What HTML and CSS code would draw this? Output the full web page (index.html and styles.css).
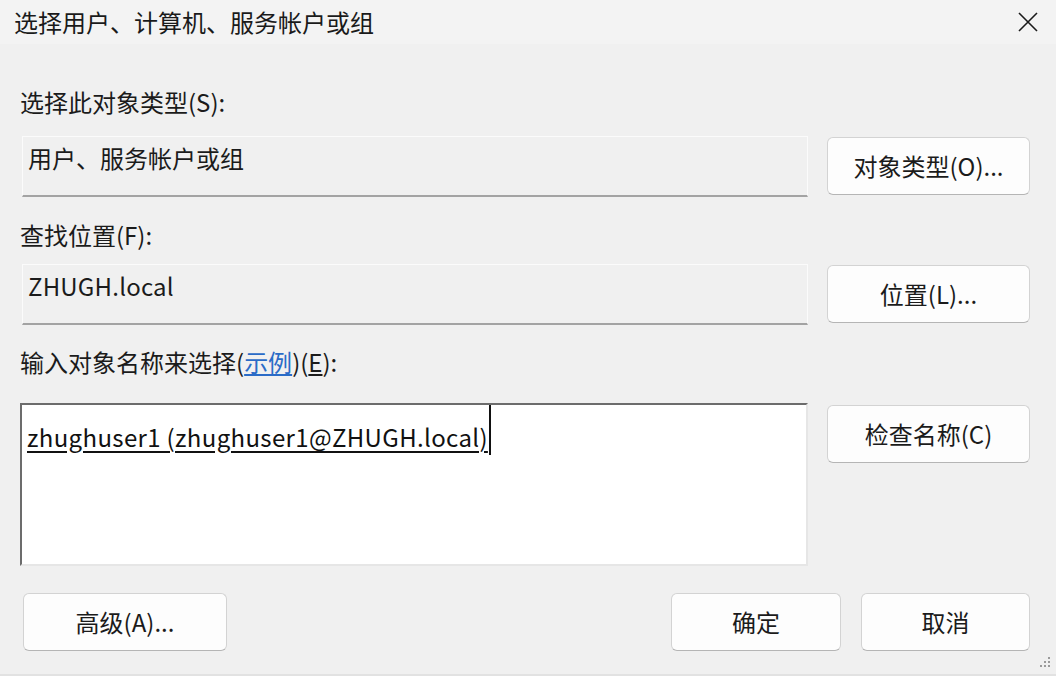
FILE: index.html
```html
<!DOCTYPE html>
<html lang="zh-CN">
<head>
<meta charset="utf-8">
<title>选择用户、计算机、服务帐户或组</title>
<link rel="stylesheet" href="styles.css">
</head>
<body>
<div class="dialog">
  <div class="titlebar">
    <span class="title">选择用户、计算机、服务帐户或组</span>
    <span class="close" aria-label="关闭">
      <svg width="20" height="20" viewBox="0 0 20 20"><path d="M1 1 L19 19 M19 1 L1 19" stroke="#1a1a1a" stroke-width="1.6" fill="none"/></svg>
    </span>
  </div>
  <div class="content">
    <div class="label label-1">选择此对象类型(S):</div>
    <div class="row row-1">
      <div class="field">用户、服务帐户或组</div>
      <button class="btn btn-side">对象类型(O)...</button>
    </div>
    <div class="label label-2">查找位置(F):</div>
    <div class="row row-2">
      <div class="field field-latin">ZHUGH.local</div>
      <button class="btn btn-side">位置(L)...</button>
    </div>
    <div class="label label-3">输入对象名称来选择(<span class="link">示例</span>)(<u>E</u>):</div>
    <div class="row row-3">
      <div class="textarea"><span class="name">zhughuser1 (zhughuser1@ZHUGH.local)</span><span class="caret"></span></div>
      <button class="btn btn-side">检查名称(C)</button>
    </div>
    <div class="footer">
      <button class="btn btn-adv">高级(A)...</button>
      <div class="spacer"></div>
      <button class="btn btn-ok">确定</button>
      <button class="btn btn-cancel">取消</button>
    </div>
  </div>
  <svg class="grip" width="14" height="14" viewBox="0 0 14 14">
    <g fill="#9a9a9a">
      <rect x="11" y="1" width="2" height="2"/>
      <rect x="7" y="5" width="2" height="2"/><rect x="11" y="5" width="2" height="2"/>
      <rect x="3" y="9" width="2" height="2"/><rect x="7" y="9" width="2" height="2"/><rect x="11" y="9" width="2" height="2"/>
    </g>
  </svg>
</div>
</body>
</html>
```
FILE: styles.css
```css
html, body {
  margin: 0;
  padding: 0;
  background: #f0f0f0;
}
body {
  font-family: "Noto Sans CJK SC", "Noto Sans", sans-serif;
  color: #1b1b1b;
  font-size: 24px;
  line-height: 32px;
}
.dialog {
  position: relative;
  width: 1056px;
  height: 676px;
  box-sizing: border-box;
  background: #f0f0f0;
  border-bottom: 2px solid #e2e2e2;
  overflow: hidden;
}
.titlebar {
  height: 44px;
  display: flex;
  align-items: center;
  justify-content: space-between;
  padding: 0 18px 0 14px;
  background: #f3f3f3;
}
.title {
  font-size: 24px;
  line-height: 32px;
  color: #1a1a1a;
}
.close {
  display: flex;
  width: 20px;
  height: 20px;
}
.content {
  padding: 0 26px 0 20px;
}
.label {
  line-height: 32px;
}
.label-1 { margin-top: 42px; }
.label-2 { margin-top: 22px; }
.label-3 { margin-top: 21px; }
.link {
  color: #2a6bc7;
  text-decoration: underline;
}
.row {
  display: grid;
  grid-template-columns: 1fr 203px;
  column-gap: 19px;
  align-items: start;
}
.row-1 { margin-top: 18px; }
.row-2 { margin-top: 13px; }
.row-3 { margin-top: 25px; }
.field {
  margin-left: 2px;
  height: 61px;
  box-sizing: border-box;
  padding: 5px 6px 0 5px;
  border: 1px solid #fbfbfb;
  border-bottom: 2px solid #a3a3a3;
  background: #f0f0f0;
  color: #1b1b1b;
}
.field-latin {
  letter-spacing: 0.2px;
}
.textarea {
  height: 163px;
  box-sizing: border-box;
  padding: 16px 6px 0 5px;
  background: #ffffff;
  border-top: 2px solid #6c6c6c;
  border-left: 2px solid #6c6c6c;
  border-right: 2px solid #e6e6e6;
  border-bottom: 2px solid #e6e6e6;
  display: flex;
  align-items: flex-start;
}
.name {
  text-decoration: underline;
  text-underline-offset: 4px;
  color: #111;
  white-space: nowrap;
  letter-spacing: 0.35px;
}
.caret {
  display: inline-block;
  width: 2px;
  height: 50px;
  margin-top: -16px;
  margin-left: 1px;
  background: #111;
}
.btn {
  font: inherit;
  color: #1b1b1b;
  height: 58px;
  box-sizing: border-box;
  background: #fdfdfd;
  border: 1px solid #d3d3d3;
  border-bottom-color: #b5b5b5;
  border-radius: 6px;
  padding: 0;
  text-align: center;
}
.btn-side {
  margin-top: 1px;
  width: 203px;
}
.row-3 .btn-side { margin-top: 2px; }
.footer {
  display: flex;
  align-items: center;
  margin-top: 27px;
  gap: 20px;
}
.btn-adv {
  margin-left: 3px;
  width: 204px;
}
.spacer { flex: 1; }
.btn-ok { width: 170px; }
.btn-cancel { width: 169px; }
.grip {
  position: absolute;
  right: 5px;
  bottom: 4px;
}
```
